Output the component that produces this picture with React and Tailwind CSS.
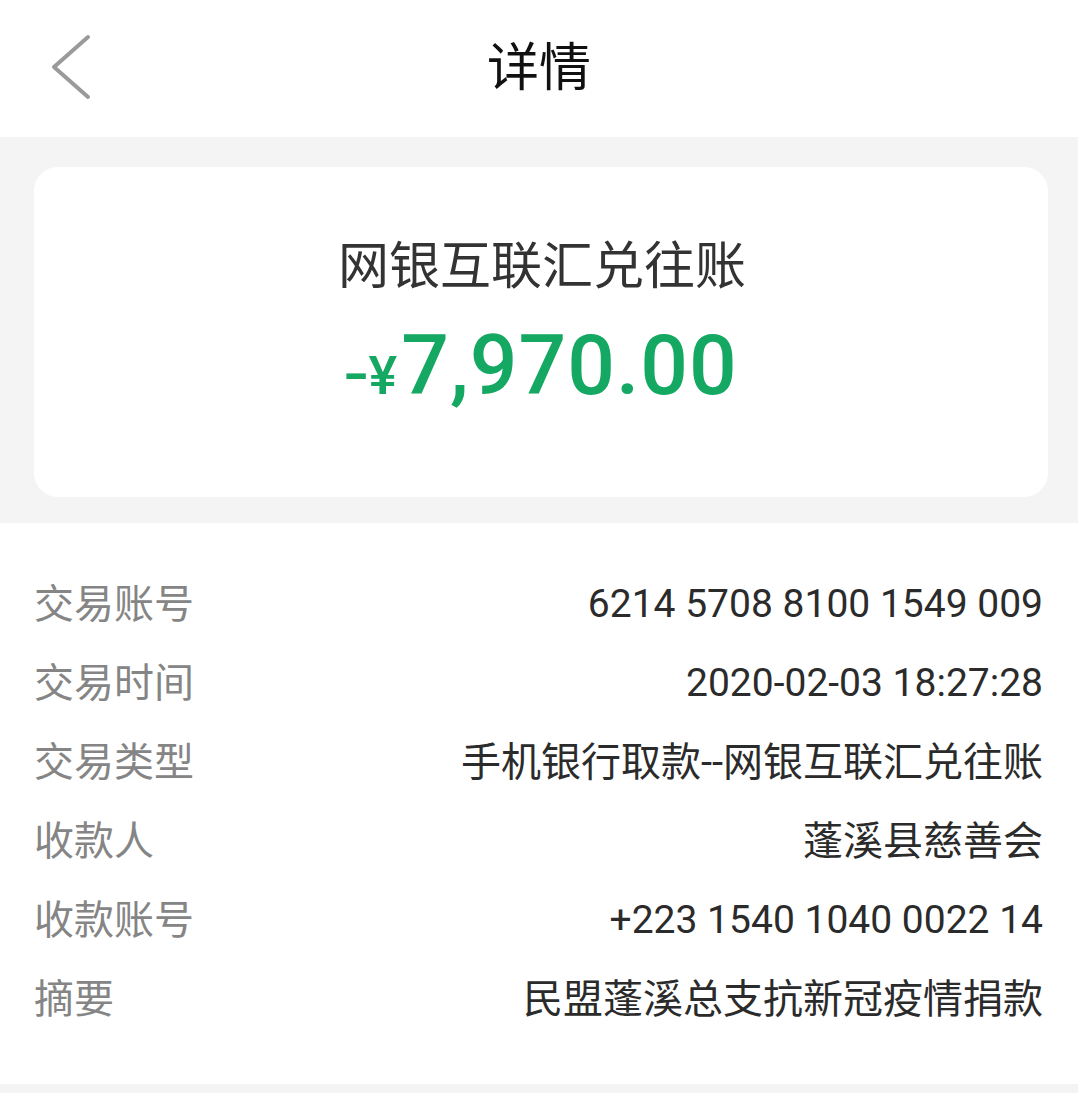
import React from 'react';

const ROWS = [
  { label: '交易账号', value: '6214 5708 8100 1549 009', num: true },
  { label: '交易时间', value: '2020-02-03 18:27:28', num: true },
  { label: '交易类型', value: '手机银行取款--网银互联汇兑往账' },
  { label: '收款人', value: '蓬溪县慈善会' },
  { label: '收款账号', value: '+223 1540 1040 0022 14', num: true },
  { label: '摘要', value: '民盟蓬溪总支抗新冠疫情捐款' },
];

const font = { fontFamily: 'Roboto, "Noto Sans CJK SC", sans-serif' };

export default function App() {
  return (
    <div className="w-[1078px] h-[1093px] bg-[#f4f4f4] flex flex-col" style={font}>
      {/* header */}
      <div className="relative h-[137px] bg-white flex items-center justify-center">
        <svg className="absolute left-[48px] top-[34px]" width="44" height="66" viewBox="0 0 44 66">
          <polyline points="40,3 6,33 40,63" fill="none" stroke="#9a9a9a" strokeWidth="4" strokeLinecap="round" strokeLinejoin="round" />
        </svg>
        <span className="text-[52px] text-[#111] leading-none">详情</span>
      </div>

      {/* amount card */}
      <div className="pl-[34px] pr-[30px] pt-[30px] pb-[26px] bg-[#f4f4f4]">
        <div className="h-[330px] bg-white rounded-[24px] flex flex-col items-center pt-[74px] pl-[2px]">
          <div className="text-[51px] leading-none text-[#333]">网银互联汇兑往账</div>
          <div className="mt-[32px] flex items-baseline text-[#14a862] font-medium leading-none">
            <span className="text-[60px] mr-[2px] scale-x-125">-</span>
            <span className="text-[54px] mr-[4px]">¥</span>
            <span className="text-[84px] tracking-[1px]">7,970.00</span>
          </div>
        </div>
      </div>

      {/* details */}
      <div className="bg-white pt-[43px] pb-[44px] px-[34px] flex flex-col">
        {ROWS.map((r) => (
          <div key={r.label} className="h-[79px] flex items-center justify-between pb-[2px]">
            <span className="text-[40px] text-[#858585] leading-none">{r.label}</span>
            <span className={`${r.num ? 'text-[39px]' : 'text-[40px]'} text-[#2b2b2b] leading-none pr-[1px]`}>{r.value}</span>
          </div>
        ))}
      </div>
    </div>
  );
}
